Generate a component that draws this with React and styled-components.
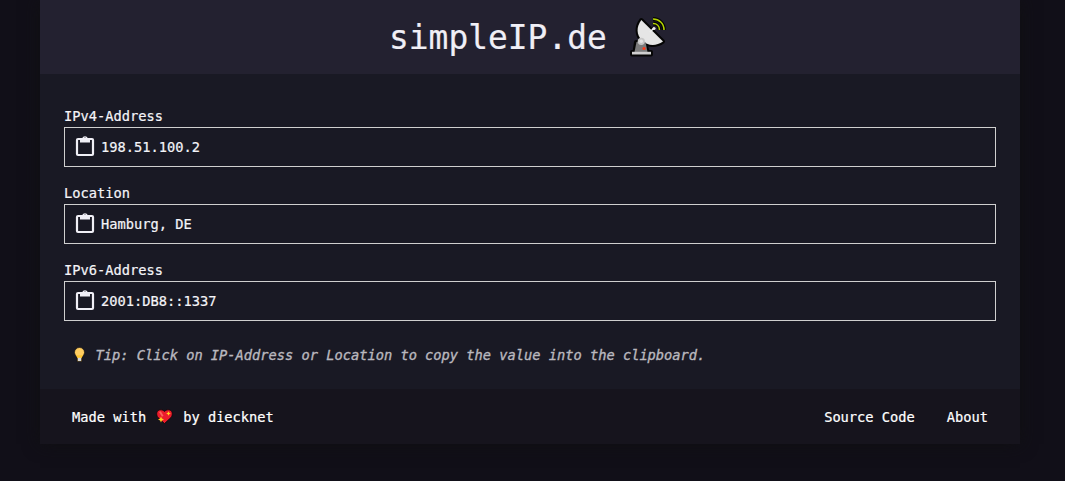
import React from "react";
import styled, { createGlobalStyle } from "styled-components";

const GlobalStyle = createGlobalStyle`
  * { box-sizing: border-box; }
  html, body { margin: 0; background: #110f18; }
  body {
    min-height: 481px;
    overflow: hidden;
    font-family: "DejaVu Sans Mono", "Liberation Mono", monospace;
    font-size: 13.7px;
    line-height: 22px;
    color: #f4f4f8;
    -webkit-text-stroke: 0.2px currentColor;
  }
`;

const Page = styled.div`
  display: flex;
  justify-content: center;
  padding-right: 5px;
`;

const Card = styled.div`
  width: 980px;
  background: #191924;
  box-shadow: 0 0 16px #101012;
`;

const Header = styled.header`
  height: 74px;
  display: flex;
  align-items: center;
  padding: 0 0 0 349px;
  background: #232130;
`;

const Title = styled.h1`
  margin: 0 21px 0 0;
  padding-top: 2px;
  font-size: 32.9px;
  line-height: 40px;
  font-weight: 400;
  color: #f0eff6;
`;

const Main = styled.main`
  height: 315px;
  padding: 31px 24px 0;
`;

const Field = styled.section`
  margin-bottom: 15px;
`;

const Label = styled.div`
  height: 22px;
`;

const ValueBox = styled.div`
  height: 40px;
  display: flex;
  align-items: center;
  gap: 4px;
  padding-left: 8px;
  border: 1px solid #cfcfcf;
`;

const Tip = styled.p`
  display: flex;
  align-items: center;
  gap: 9.5px;
  margin: 0;
  padding: 8px 0 0 8px;
  font-style: italic;
  color: #b9b8bf;
  -webkit-text-stroke-width: 0.35px;
`;

const Footer = styled.footer`
  height: 55px;
  display: flex;
  align-items: center;
  justify-content: space-between;
  padding: 0 32px;
  background: #16141d;
  color: #fff;
`;

const Credit = styled.div`
  display: flex;
  align-items: center;
  gap: 9.5px;
`;

const Links = styled.nav`
  display: flex;
  gap: 32px;
`;

const FooterLink = styled.a`
  color: inherit;
  text-decoration: none;
`;

const Icon = styled.svg`
  display: block;
  flex: none;
`;

const Clipboard = () => (
  <Icon width="24" height="24" viewBox="0 0 24 24">
    <rect x="4" y="4" width="16" height="16" rx="1" fill="none" stroke="#f0eff6" strokeWidth="2.200" />
    <path
      fill="#f0eff6"
      fillRule="evenodd"
      d="M7 3h2.300a2.800 2.300 0 0 1 5.400 0H17v4.500H7zM12 2.500a1 1 0 1 0 0 2 1 1 0 0 0 0-2z"
    />
  </Icon>
);

const Satellite = () => (
  <Icon width="38" height="42" viewBox="0 0 38 42">
    <g fill="#050505" stroke="#050505" strokeWidth="4" strokeLinejoin="round">
      <path d="M13.300 4C8 11 8.500 19 14 24.500c5.500 5.500 14 6 21 1z" />
      <path d="M8 26h9l2.500 10H6.500z" />
      <path d="M4 36h19v2.500h-19z" />
      <path d="M22 16l4-4" />
      <path d="M25 3c6 0 11 4.500 11 11M25 7.500c3.800 0 6.500 2.700 6.500 6.500" fill="none" strokeWidth="4" />
    </g>
    <path d="M13.300 4C8 11 8.500 19 14 24.500c5.500 5.500 14 6 21 1z" fill="#e5e5e5" />
    <path d="M22 16l4-4" stroke="#eee" strokeWidth="1.600" />
    <circle cx="26" cy="12.500" r="1.600" fill="#eee" />
    <path d="M25 3c6 0 11 4.500 11 11M25 7.500c3.800 0 6.500 2.700 6.500 6.500" fill="none" stroke="#b5d600" strokeWidth="1.500" />
    <path d="M8.500 26h9L19.500 36h-13z" fill="#7b7b7b" />
    <circle cx="13.300" cy="25.300" r="3.600" fill="#c7c7c7" />
    <circle cx="13.300" cy="25.300" r="1.700" fill="#e5e5e5" />
    <circle cx="16" cy="32.500" r="1.600" fill="#ff3818" />
    <path d="M4 35.800h19v2.700h-19z" fill="#cfcfcf" />
  </Icon>
);

const Bulb = () => (
  <Icon width="14" height="18" viewBox="0 0 14 18">
    <path
      d="M7.500 1.500a5 5 0 0 0-5 5c0 2.600 2.500 3.500 2.800 6v3h4.400v-3c.3-2.500 2.800-3.400 2.800-6a5 5 0 0 0-5-5z"
      fill="#ffcd61"
      stroke="#0b0a0d"
      strokeWidth="0.600"
    />
    <path d="M3.800 9.200h7.400L9.300 12H5.700z" fill="#ffc52f" />
    <path d="M6 11.800h3v3.200H6z" fill="#d6d6d6" />
  </Icon>
);

const Heart = () => (
  <Icon width="18" height="17" viewBox="0 0 18 17">
    <path
      d="M8.500 15.500L2 9.500C-.5 6.500.8 1.800 4.500 1.800c1.800 0 3 .6 4 1.700 1-1.100 2.200-1.700 4-1.700C16.200 1.800 17.500 6.500 15 9.500z"
      fill="#eb1c2c"
      stroke="#090709"
      strokeWidth="0.800"
    />
    <path d="M3 4l1.800-.8 2.700 4.600-1.500.9z" fill="#f8615b" />
    <path
      d="M12.500 3.200l.7 1.600 1.600.7-1.600.7-.7 1.600-.7-1.600-1.600-.7 1.600-.7zM5 8.500l.9 2.100 2.100.9-2.100.9L5 14.500l-.9-2.100-2.100-.9 2.100-.9z"
      fill="#ffd31d"
    />
  </Icon>
);

const fields = [
  ["IPv4-Address", "198.51.100.2"],
  ["Location", "Hamburg, DE"],
  ["IPv6-Address", "2001:DB8::1337"],
];

export default function App() {
  return (
    <>
      <GlobalStyle />
      <Page>
        <Card>
          <Header>
            <Title>simpleIP.de</Title>
            <Satellite />
          </Header>
          <Main>
            {fields.map(([label, value]) => (
              <Field key={label}>
                <Label>{label}</Label>
                <ValueBox>
                  <Clipboard />
                  <span>{value}</span>
                </ValueBox>
              </Field>
            ))}
            <Tip>
              <Bulb />
              <span>Tip: Click on IP-Address or Location to copy the value into the clipboard.</span>
            </Tip>
          </Main>
          <Footer>
            <Credit>
              <span>Made with</span>
              <Heart />
              <span>by diecknet</span>
            </Credit>
            <Links>
              <FooterLink>Source Code</FooterLink>
              <FooterLink>About</FooterLink>
            </Links>
          </Footer>
        </Card>
      </Page>
    </>
  );
}
